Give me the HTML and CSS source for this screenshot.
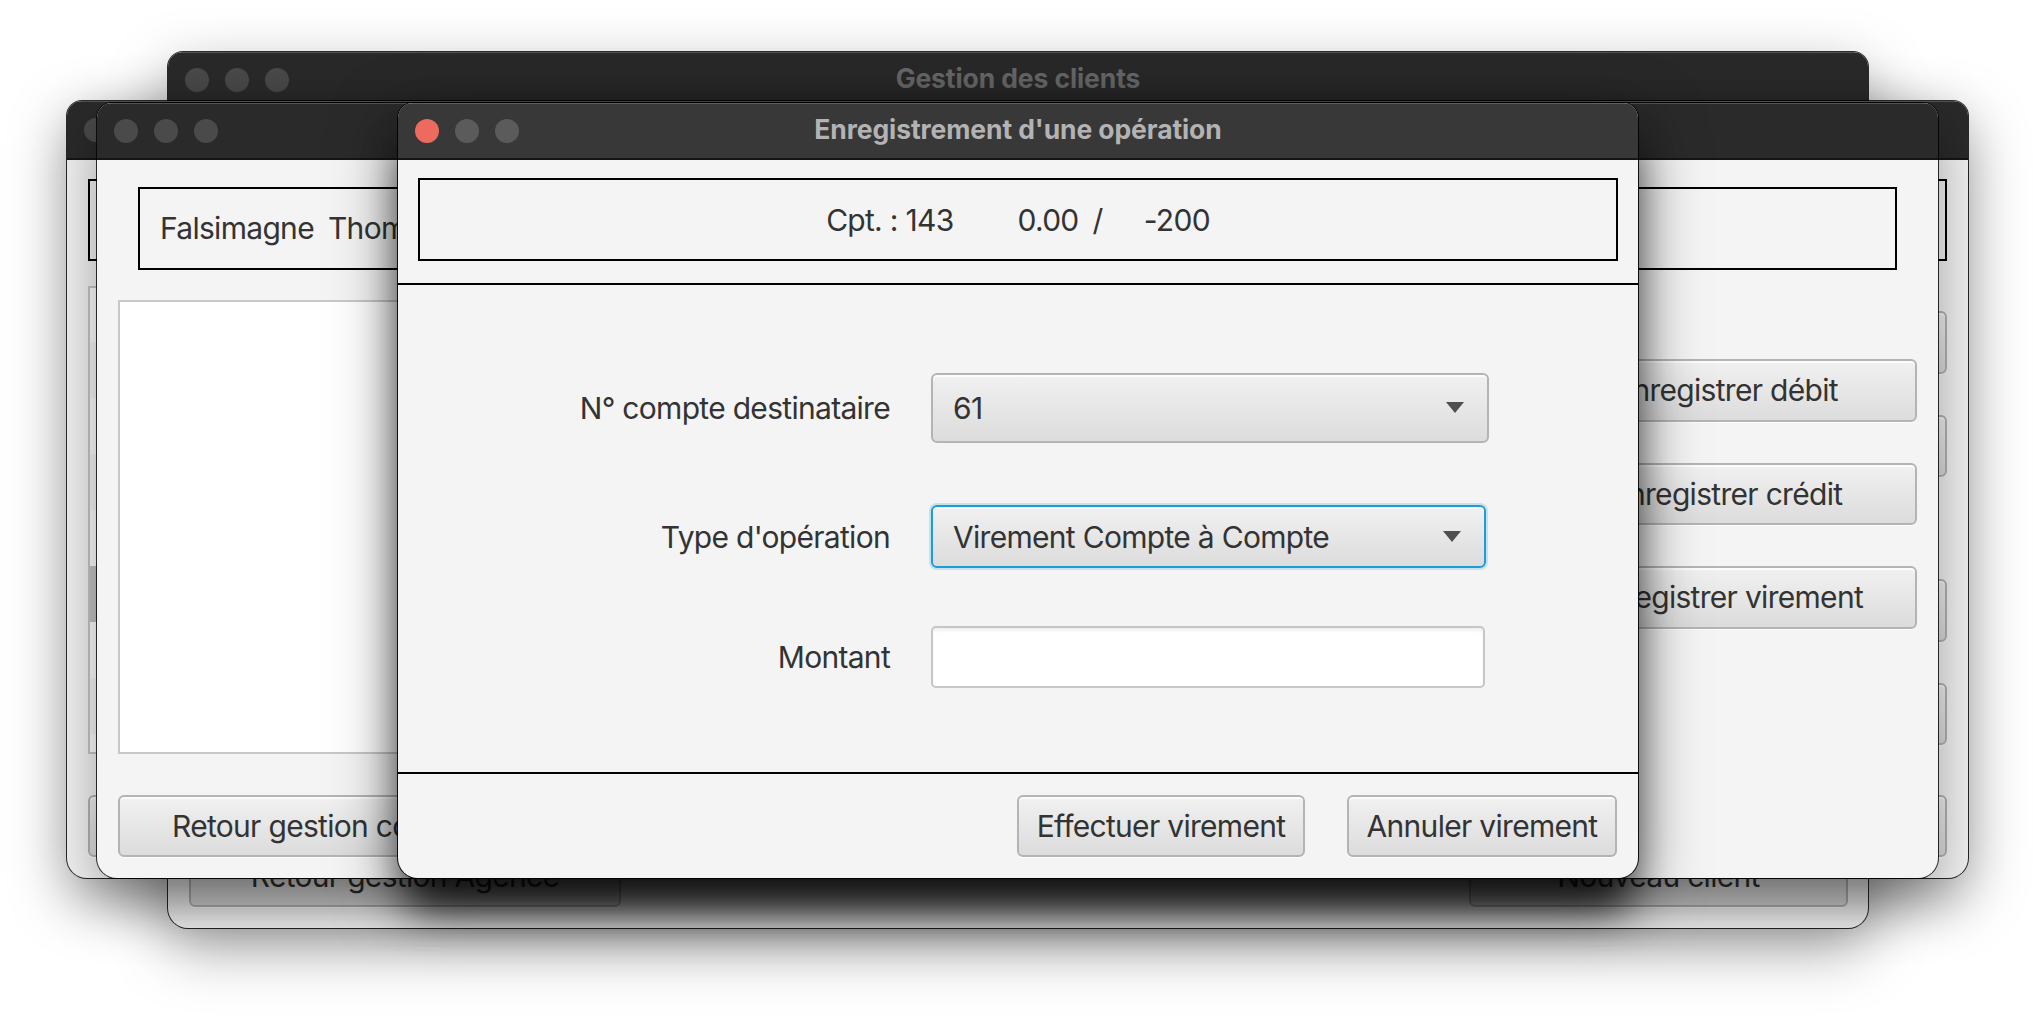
FILE: index.html
```html
<!DOCTYPE html>
<html lang="fr">
<head>
<meta charset="utf-8">
<title>Enregistrement d'une opération</title>
<link rel="stylesheet" href="styles.css">
</head>
<body>
<div class="desk">

  <div class="win w1">
    <div class="titlebar">
      <div class="lights"><i></i><i></i><i></i></div>
      <div class="title">Gestion des clients</div>
      <div></div>
    </div>
    <div class="w1-body">
      <div class="w1-foot">
        <button class="btn w1-btn-a">Retour gestion Agence</button>
        <button class="btn w1-btn-b">Nouveau client</button>
      </div>
    </div>
  </div>

  <div class="win w2">
    <div class="titlebar tb-w2">
      <div class="lights"><i></i><i></i><i></i></div>
      <div class="title"></div>
      <div></div>
    </div>
    <div class="w2-body">
      <div class="infobox w2-box"></div>
      <div class="w2-row">
        <div class="list w2-list">
          <div class="row"></div><div class="row alt"></div><div class="row"></div><div class="row alt"></div>
          <div class="row"></div><div class="row sel"></div><div class="row"></div><div class="row alt"></div>
        </div>
        <div class="w2-actions">
          <button class="btn w2-b1"></button>
          <button class="btn w2-b2"></button>
          <button class="btn w2-b3"></button>
          <button class="btn w2-b4"></button>
        </div>
      </div>
      <div class="w2-foot">
        <button class="btn w2-back"></button>
        <button class="btn w2-new"></button>
      </div>
    </div>
  </div>

  <div class="win w3">
    <div class="titlebar">
      <div class="lights"><i></i><i></i><i></i></div>
      <div class="title"></div>
      <div></div>
    </div>
    <div class="w3-body">
      <div class="infobox w3-box"><span>Falsimagne</span><span class="gap">Thomas</span></div>
      <div class="w3-row">
        <div class="list w3-list"></div>
        <div class="w3-actions">
          <button class="btn act">Enregistrer débit</button>
          <button class="btn act">Enregistrer crédit</button>
          <button class="btn act">Enregistrer virement</button>
        </div>
      </div>
      <div class="w3-foot">
        <button class="btn w3-back">Retour gestion comptes</button>
      </div>
    </div>
  </div>

  <div class="win dlg">
    <div class="titlebar">
      <div class="lights"><i></i><i></i><i></i></div>
      <div class="title">Enregistrement d'une opération</div>
      <div></div>
    </div>
    <div class="dlg-head">
      <div class="infobox dlg-box">
        <span>Cpt. : 143</span><span class="v-solde">0.00</span><span class="v-slash">/</span><span class="v-decouvert">-200</span>
      </div>
    </div>
    <div class="dlg-form">
      <div class="frow r1">
        <label class="flabel">N° compte destinataire</label>
        <div class="combo c1"><span>61</span><b class="arrow"></b></div>
      </div>
      <div class="frow r2">
        <label class="flabel">Type d'opération</label>
        <div class="combo c2 focus"><span>Virement Compte à Compte</span><b class="arrow"></b></div>
      </div>
      <div class="frow r3">
        <label class="flabel">Montant</label>
        <div class="field"></div>
      </div>
    </div>
    <div class="dlg-foot">
      <button class="btn b-ok">Effectuer virement</button>
      <button class="btn b-cancel">Annuler virement</button>
    </div>
  </div>

</div>
</body>
</html>
```

FILE: styles.css
```css
* { box-sizing: border-box; }
html, body { margin: 0; padding: 0; }
body {
  width: 2036px;
  height: 1026px;
  background: #ffffff;
  overflow: hidden;
  font-family: Inter, "Noto Sans", "Liberation Sans", sans-serif;
  color: #333333;
}
.desk { position: relative; width: 2036px; height: 1026px; }

/* ---------- windows ---------- */
.win {
  position: absolute;
  display: flex;
  flex-direction: column;
  background: #f4f4f4;
  border-radius: 15px 15px 20px 20px;
  overflow: hidden;
  box-shadow: 0 0 0 1px rgba(0,0,0,0.82), 0 20px 60px rgba(0,0,0,0.36);
}
.w1 { left: 168px; top: 52px; width: 1700px; height: 876px; }
.w2 { left: 67px; top: 101px; width: 1901px; height: 777px; }
.w3 { left: 97px; top: 103px; width: 1841px; height: 775px; }
.dlg {
  left: 398px; top: 103px; width: 1240px; height: 775px;
  box-shadow: 0 0 0 1px rgba(0,0,0,0.9), 0 22px 64px rgba(0,0,0,0.55), 0 40px 40px -10px rgba(0,0,0,0.75);
}

.titlebar {
  flex: none;
  height: 57px;
  background: #2a2a2a;
  border-bottom: 2px solid #151515;
  display: grid;
  grid-template-columns: 1fr auto 1fr;
  align-items: center;
  box-shadow: inset 0 1px 0 rgba(255,255,255,0.2);
}
.tb-w2 { height: 59px; }
.w1 .titlebar { height: 58px; }
.lights { display: flex; gap: 16px; padding-left: 17px; }
.lights i { display: block; width: 24px; height: 24px; border-radius: 50%; background: #4a4a4a; }
.title { font-weight: 700; font-size: 26.5px; color: #6a6a6a; white-space: nowrap; letter-spacing: -0.1px; padding-bottom: 4px; }
.dlg .titlebar { background: #383838; }
.dlg .lights i { background: #5b5b5b; }
.dlg .lights i:first-child { background: #ec6a5e; }
.dlg .title { color: #b3b3b3; }

/* ---------- shared controls ---------- */
.btn {
  font-family: inherit;
  font-size: 30px;
  letter-spacing: -0.7px;
  color: #333333;
  height: 62.5px;
  padding: 0 22px;
  border: 2px solid #b4b4b4;
  border-radius: 6px;
  background: linear-gradient(#f1f1f1, #dcdcdc);
  box-shadow: inset 0 2px 0 rgba(255,255,255,0.75), 0 1px 0 rgba(255,255,255,0.8);
  white-space: nowrap;
}
.infobox {
  border: 2px solid #000000;
  display: flex;
  align-items: center;
  font-size: 30px;
  letter-spacing: -0.7px;
}
.list {
  background: #ffffff;
  border: 2px solid #c8c8c8;
}

/* ---------- W1 (Gestion des clients) ---------- */
.w1-body { flex: 1; display: flex; flex-direction: column; justify-content: flex-end; }
.w1-foot { display: flex; justify-content: space-between; padding: 0 20px 21px 21px; }
.w1-btn-a { width: 432px; }
.w1-btn-b { width: 379px; }

/* ---------- W2 ---------- */
.w2-body { flex: 1; display: flex; flex-direction: column; padding: 19px 21px 21px; }
.w2-box { height: 82px; }
.w2-row { display: flex; margin-top: 25px; height: 468px; }
.w2-list { width: 700px; display: flex; flex-direction: column; }
.w2-list .row { height: 56px; flex: none; }
.w2-list .row:first-child { height: 54px; }
.w2-list .row.alt { background: #f7f7f7; }
.w2-list .row.sel { background: #c4c4c4; }
.w2-actions { margin-left: auto; display: flex; flex-direction: column; width: 380px; }
.w2-actions .btn { width: 100%; flex: none; }
.w2-b1 { margin-top: 25px; }
.w2-b2 { margin-top: 41px; }
.w2-b3 { margin-top: 102px; }
.w2-b4 { margin-top: 41px; }
.w2-foot { display: flex; justify-content: space-between; margin-top: 40.5px; }
.w2-foot .btn { width: 380px; }

/* ---------- W3 (client) ---------- */
.w3-body { flex: 1; display: flex; flex-direction: column; padding: 26.5px 21px 21px; }
.w3-box { height: 83px; margin: 0 20px; padding-left: 20px; }
.w3-box .gap { margin-left: 14px; }
.w3-row { display: flex; margin-top: 30px; height: 454px; }
.w3-list { width: 900px; }
.w3-actions { margin-left: auto; display: flex; flex-direction: column; gap: 41px; padding-top: 59.5px; width: 381px; }
.w3-actions .btn { width: 100%; }
.w3-foot { margin-top: 41px; display: flex; }
.w3-back { width: 430px; text-align: left; padding-left: 52px; }

/* ---------- dialog ---------- */
.dlg-head { flex: none; padding: 18px 20px 21.5px; }
.dlg-box { height: 83px; justify-content: center; }
.v-solde { margin-left: 64px; }
.v-slash { margin-left: 14px; }
.v-decouvert { margin-left: 41px; }

.dlg-form {
  flex: none;
  height: 491px;
  border-top: 2px solid #000000;
  border-bottom: 2px solid #000000;
  display: flex;
  flex-direction: column;
}
.frow { display: flex; align-items: center; }
.r1 { margin-top: 88px; height: 70px; }
.r2 { margin-top: 62.5px; height: 63px; }
.r3 { margin-top: 57.5px; height: 62.5px; }
.flabel { width: 492px; text-align: right; font-size: 30px; letter-spacing: -0.7px; color: #333333; flex: none; }

.combo {
  margin-left: 41px;
  height: 100%;
  display: flex;
  align-items: center;
  justify-content: space-between;
  padding: 0 23px 0 20px;
  border: 2px solid #b4b4b4;
  border-radius: 6px;
  background: linear-gradient(#f1f1f1, #dcdcdc);
  box-shadow: inset 0 2px 0 rgba(255,255,255,0.75);
  font-size: 30px;
  letter-spacing: -0.7px;
  color: #333333;
}
.c1 { width: 558px; }
.c2 { width: 555px; }
.combo.focus {
  border-color: #1b9ed6;
  box-shadow: 0 0 0 2px rgba(27,158,214,0.22), inset 0 2px 0 rgba(255,255,255,0.75);
}
.arrow {
  width: 0; height: 0;
  border-left: 9px solid transparent;
  border-right: 9px solid transparent;
  border-top: 11px solid #4f4f4f;
}
.field {
  margin-left: 41px;
  width: 554px;
  height: 100%;
  background: #ffffff;
  border: 2px solid #c6c6c6;
  border-radius: 5px;
  box-shadow: inset 0 4px 5px -3px rgba(0,0,0,0.1);
}

.dlg-foot {
  flex: 1;
  display: flex;
  justify-content: flex-end;
  align-items: flex-start;
  gap: 42px;
  padding: 21px 21px 0;
}
.b-ok { width: 288px; padding: 0; }
.b-cancel { width: 270px; padding: 0; }
```
